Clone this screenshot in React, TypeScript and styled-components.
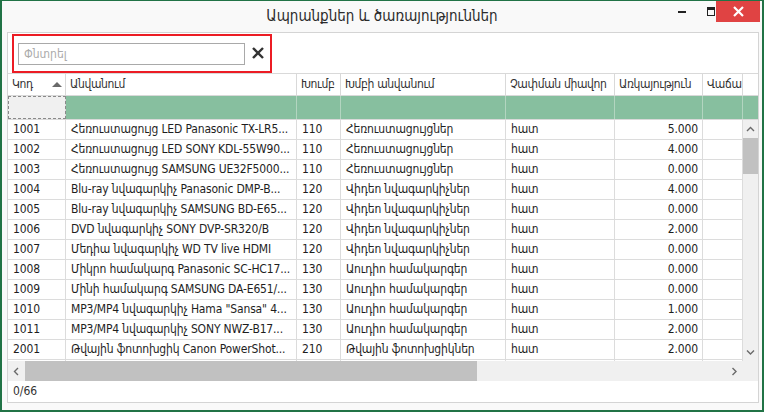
import React from 'react';
import styled, { createGlobalStyle } from 'styled-components';

const GlobalStyle = createGlobalStyle`
  html, body { margin: 0; padding: 0; background: #ffffff; }
  body { font-family: "DejaVu Sans Condensed", "DejaVu Sans", sans-serif; }
  * { box-sizing: border-box; }
`;

const COLS = [58, 231, 44, 165, 109, 88, 40];
const SCROLL_W = 15;

const Window = styled.div`
  width: 764px;
  height: 412px;
  background: #f9f9f9;
  border: 2px solid #217346;
  border-top-width: 1px;
  display: flex;
  flex-direction: column;
`;

const TitleBar = styled.div`
  height: 30px;
  flex: none;
  display: grid;
  grid-template-columns: 1fr auto 1fr;
  align-items: start;
`;

const Title = styled.div`
  grid-column: 2;
  font-size: 15px;
  line-height: 30px;
  color: #2b2b2b;
  white-space: nowrap;
`;

const Controls = styled.div`
  grid-column: 3;
  justify-self: end;
  display: flex;
  align-items: center;
  height: 21px;
  margin-right: 2px;
`;

const MinIcon = styled.div`
  width: 8px;
  height: 2px;
  background: #222;
  margin-right: 21px;
`;

const MaxIcon = styled.div`
  width: 8px;
  height: 9px;
  border: 1px solid #222;
  border-top-width: 3px;
  margin-right: 1px;
`;

const CloseButton = styled.div`
  width: 44px;
  height: 21px;
  background: #e04343;
  display: flex;
  align-items: center;
  justify-content: center;
`;

const Panel = styled.div`
  flex: 1;
  margin: 1px 3px 7px 5px;
  border: 1px solid #d4d4d4;
  background: #ffffff;
  display: flex;
  flex-direction: column;
  overflow: hidden;
`;

const SearchArea = styled.div`
  height: 40px;
  flex: none;
  padding: 1px 0 0 4px;
`;

const Highlight = styled.div`
  width: 260px;
  height: 39px;
  border: 2px solid #ec1c24;
  display: flex;
  align-items: center;
  padding-left: 4px;
`;

const SearchInput = styled.input`
  width: 227px;
  height: 22px;
  border: 1px solid #a9a9a9;
  padding: 0 5px;
  font-family: inherit;
  font-size: 12px;
  color: #222;
  outline: none;
  &::placeholder { color: #ababab; }
`;

const ClearButton = styled.div`
  flex: 1;
  display: flex;
  align-items: center;
  justify-content: center;
  padding-bottom: 1px;
`;

const HeaderRow = styled.div`
  display: flex;
  flex: none;
  height: 23px;
  border-top: 1px solid #d9d9d9;
  border-bottom: 1px solid #d9d9d9;
`;

const HeaderCell = styled.div<{ $w: number; $sorted?: boolean }>`
  width: ${p => p.$w}px;
  flex: none;
  border-right: 1px solid #d9d9d9;
  padding: 0 ${p => (p.$sorted ? '3px' : '0')} 0 4px;
  font-size: 12px;
  letter-spacing: -0.35px;
  line-height: 21px;
  color: #333;
  white-space: nowrap;
  overflow: hidden;
  display: flex;
  align-items: center;
  justify-content: space-between;
`;

const Filler = styled.div<{ $bg: string }>`
  flex: 1;
  background: ${p => p.$bg};
`;

const FilterRow = styled.div`
  display: flex;
  flex: none;
  height: 24px;
  border-bottom: 1px solid #d9d9d9;
  background: #87bf9f;
`;

const FilterCell = styled.div<{ $w: number; $focus?: boolean }>`
  width: ${p => p.$w}px;
  flex: none;
  border-right: 1px solid ${p => (p.$focus ? '#d9d9d9' : '#b3d5c0')};
  background: ${p => (p.$focus ? '#f0f0f0' : 'transparent')};
  ${p => (p.$focus ? 'outline: 1px dashed #8a8a8a; outline-offset: -1px;' : '')}
`;

const Body = styled.div`
  flex: 1;
  display: flex;
  min-height: 0;
`;

const Rows = styled.div`
  flex: 1;
  overflow: hidden;
`;

const DataRow = styled.div`
  display: flex;
  height: 20px;
  border-bottom: 1px solid #dcdcdc;
`;

const Cell = styled.div<{ $w: number; $right?: boolean }>`
  width: ${p => p.$w}px;
  flex: none;
  border-right: 1px solid #dcdcdc;
  padding: 0 ${p => (p.$right ? '4px' : '1px')} 0 5px;
  font-size: 12px;
  letter-spacing: -0.15px;
  line-height: 19px;
  color: #1e1e1e;
  white-space: nowrap;
  overflow: hidden;
  text-overflow: ellipsis;
  text-align: ${p => (p.$right ? 'right' : 'left')};
`;

const VScroll = styled.div`
  width: ${SCROLL_W}px;
  flex: none;
  background: #f0f0f0;
  display: flex;
  flex-direction: column;
`;

const ArrowBox = styled.div<{ $h: number; $w?: number }>`
  height: ${p => p.$h}px;
  width: ${p => (p.$w ? `${p.$w}px` : 'auto')};
  flex: none;
  display: flex;
  align-items: center;
  justify-content: center;
`;

const VThumb = styled.div`
  height: 36px;
  flex: none;
  background: #c1c1c1;
`;

const Spacer = styled.div`
  flex: 1;
`;

const HScrollRow = styled.div`
  height: 20px;
  flex: none;
  display: flex;
  background: #f0f0f0;
`;

const HTrack = styled.div`
  width: ${COLS.reduce((a, b) => a + b, 0)}px;
  display: flex;
`;

const HThumb = styled.div`
  width: 452px;
  background: #c1c1c1;
`;

const StatusBar = styled.div`
  height: 21px;
  flex: none;
  padding-left: 5px;
  font-size: 12px;
  line-height: 21px;
  color: #333;
`;

const Chevron = ({ dir }: { dir: 'up' | 'down' | 'left' | 'right' }) => {
  const pts: Record<string, string> = {
    up: '1,5 4.5,1.5 8,5',
    down: '1,1.5 4.5,5 8,1.5',
    left: '5,1 1.5,4.5 5,8',
    right: '1.5,1 5,4.5 1.5,8',
  };
  const vert = dir === 'up' || dir === 'down';
  return (
    <svg width={vert ? 9 : 7} height={vert ? 7 : 9} viewBox={vert ? '0 0 9 7' : '0 0 7 9'}>
      <polyline points={pts[dir]} fill="none" stroke="#6a6a6a" strokeWidth="1.4" />
    </svg>
  );
};

const headers = ['Կոդ', 'Անվանում', 'Խումբ', 'Խմբի անվանում', 'Չափման միավոր', 'Առկայություն', 'Վաճա'];

const rows: string[][] = [
  ['1001', 'Հեռուստացույց LED Panasonic TX-LR5...', '110', 'Հեռուստացույցներ', 'հատ', '5.000'],
  ['1002', 'Հեռուստացույց LED SONY KDL-55W90...', '110', 'Հեռուստացույցներ', 'հատ', '4.000'],
  ['1003', 'Հեռուստացույց SAMSUNG UE32F5000...', '110', 'Հեռուստացույցներ', 'հատ', '0.000'],
  ['1004', 'Blu-ray նվագարկիչ Panasonic DMP-B...', '120', 'Վիդեո նվագարկիչներ', 'հատ', '4.000'],
  ['1005', 'Blu-ray նվագարկիչ SAMSUNG BD-E65...', '120', 'Վիդեո նվագարկիչներ', 'հատ', '0.000'],
  ['1006', 'DVD նվագարկիչ SONY DVP-SR320/B', '120', 'Վիդեո նվագարկիչներ', 'հատ', '2.000'],
  ['1007', 'Մեդիա նվագարկիչ WD TV live HDMI', '120', 'Վիդեո նվագարկիչներ', 'հատ', '0.000'],
  ['1008', 'Միկրո համակարգ Panasonic SC-HC17...', '130', 'Աուդիո համակարգեր', 'հատ', '0.000'],
  ['1009', 'Մինի համակարգ SAMSUNG DA-E651/...', '130', 'Աուդիո համակարգեր', 'հատ', '0.000'],
  ['1010', 'MP3/MP4 նվագարկիչ Hama "Sansa" 4...', '130', 'Աուդիո համակարգեր', 'հատ', '1.000'],
  ['1011', 'MP3/MP4 նվագարկիչ SONY NWZ-B17...', '130', 'Աուդիո համակարգեր', 'հատ', '2.000'],
  ['2001', 'Թվային ֆոտոխցիկ Canon PowerShot...', '210', 'Թվային ֆոտոխցիկներ', 'հատ', '2.000'],
  ['', '', '', '', '', ''],
];

export default function App() {
  return (
    <>
      <GlobalStyle />
      <Window>
        <TitleBar>
          <Title>Ապրանքներ և ծառայություններ</Title>
          <Controls>
            <MinIcon />
            <MaxIcon />
            <CloseButton>
              <svg width="11" height="11" viewBox="0 0 11 11">
                <path d="M1 1 L10 10 M10 1 L1 10" stroke="#fff" strokeWidth="2.2" />
              </svg>
            </CloseButton>
          </Controls>
        </TitleBar>
        <Panel>
          <SearchArea>
            <Highlight>
              <SearchInput placeholder="Փնտրել" />
              <ClearButton>
                <svg width="12" height="12" viewBox="0 0 12 12">
                  <path d="M1 1 L11 11 M11 1 L1 11" stroke="#333" strokeWidth="2.4" />
                </svg>
              </ClearButton>
            </Highlight>
          </SearchArea>
          <HeaderRow>
            {headers.map((h, i) => (
              <HeaderCell key={h} $w={COLS[i]} $sorted={i === 0}>
                <span>{h}</span>
                {i === 0 && (
                  <svg width="10" height="5" viewBox="0 0 10 5">
                    <polygon points="0,5 5,0 10,5" fill="#6a6a6a" />
                  </svg>
                )}
              </HeaderCell>
            ))}
            <Filler $bg="#ffffff" />
          </HeaderRow>
          <FilterRow>
            {COLS.map((w, i) => (
              <FilterCell key={i} $w={w} $focus={i === 0} />
            ))}
            <Filler $bg="transparent" />
          </FilterRow>
          <Body>
            <Rows>
              {rows.map((r, ri) => (
                <DataRow key={ri}>
                  {COLS.map((w, i) => (
                    <Cell key={i} $w={w} $right={i === 5}>
                      {r[i] ?? ''}
                    </Cell>
                  ))}
                </DataRow>
              ))}
            </Rows>
            <VScroll>
              <ArrowBox $h={18}>
                <Chevron dir="up" />
              </ArrowBox>
              <VThumb />
              <Spacer />
              <ArrowBox $h={18}>
                <Chevron dir="down" />
              </ArrowBox>
            </VScroll>
          </Body>
          <HScrollRow>
            <HTrack>
              <ArrowBox $h={20} $w={17}>
                <Chevron dir="left" />
              </ArrowBox>
              <HThumb />
              <Spacer />
              <ArrowBox $h={20} $w={17}>
                <Chevron dir="right" />
              </ArrowBox>
            </HTrack>
          </HScrollRow>
          <StatusBar>0/66</StatusBar>
        </Panel>
      </Window>
    </>
  );
}
